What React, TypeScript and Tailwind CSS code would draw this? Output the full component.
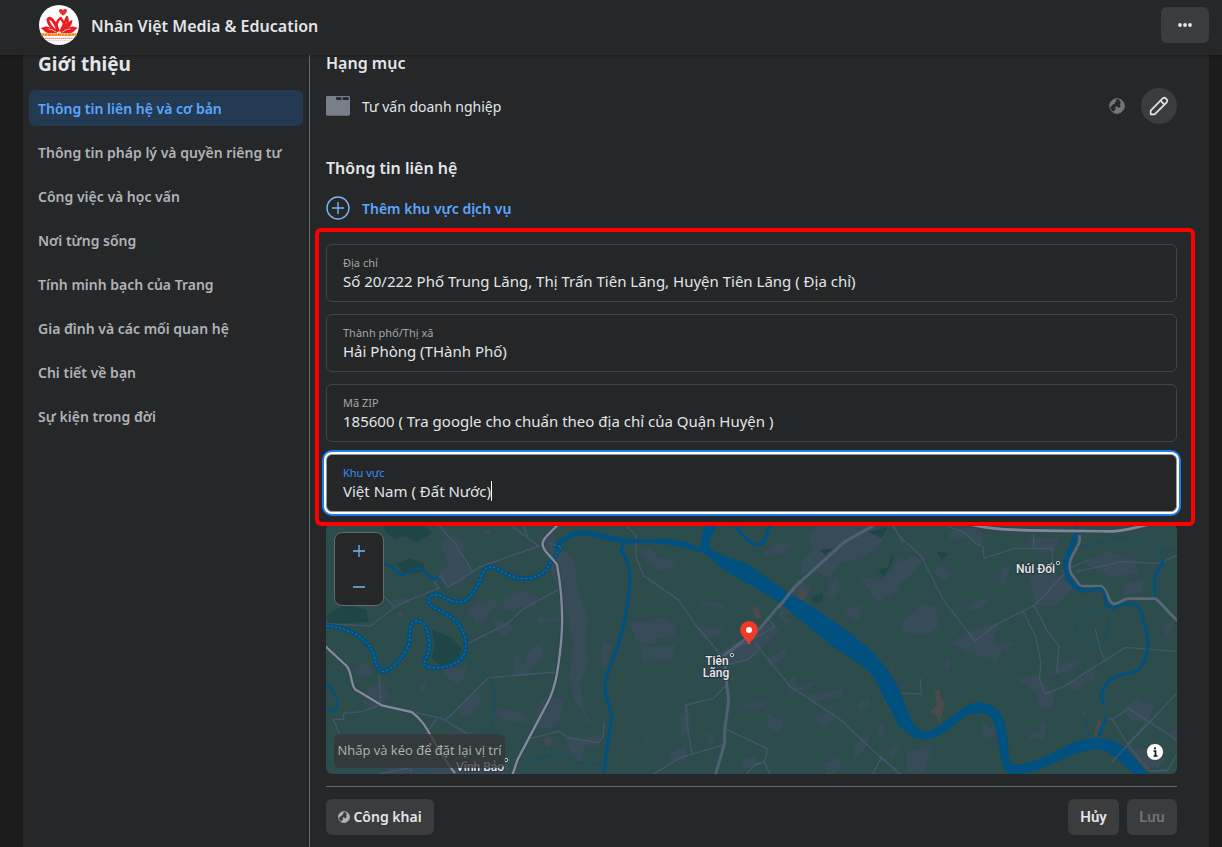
import React from "react";

const sections = [
  "Thông tin liên hệ và cơ bản",
  "Thông tin pháp lý và quyền riêng tư",
  "Công việc và học vấn",
  "Nơi từng sống",
  "Tính minh bạch của Trang",
  "Gia đình và các mối quan hệ",
  "Chi tiết về bạn",
  "Sự kiện trong đời",
];

const fields = [
  { id: "address", label: "Địa chỉ", value: "Số 20/222 Phố Trung Lăng, Thị Trấn Tiên Lãng, Huyện Tiên Lãng ( Địa chỉ)" },
  { id: "city", label: "Thành phố/Thị xã", value: "Hải Phòng (THành Phố)" },
  { id: "zip", label: "Mã ZIP", value: "185600 ( Tra google cho chuẩn theo địa chỉ của Quận Huyện )" },
  { id: "region", label: "Khu vực", value: "Việt Nam ( Đất Nước)", active: true },
];

function Logo() {
  return (
    <svg viewBox="0 0 120 120" className="size-10 shrink-0" aria-hidden="true">
      <circle cx="60" cy="60" r="60" fill="#fff" />
      <path d="M72 32c-7-6-12-10-12-15 0-6 8-7 12-1 3-6 12-5 12 1 0 6-5 9-12 15z" fill="#e0342c" />
      <g fill="none" stroke="#ee1c22" strokeLinejoin="round">
        <path d="M53 80C40 72 27 56 27 45c1-9 11-5 17 5 7 11 12 20 14 29" strokeWidth="9" />
        <path d="M56 80C51 64 53 47 65 39c7 10 13 20 18 31" strokeWidth="7" />
        <path d="M64 80c7-14 14-29 20-44 4 12 2 25-6 39" strokeWidth="7" />
      </g>
      <g fill="#ee1c22">
        <path d="M55 84C47 76 36 66 24 65c-7-1-13 3-20 5 8 2 12 12 22 14z" />
        <path d="M64 84c10-9 20-18 34-19 7-1 12 3 19 4-8 3-11 13-22 15z" />
        <path d="M67 81c4-17 16-30 33-36 1 15-12 29-33 36z" />
      </g>
      <path d="M28 72q14 0 24 10M94 72q-16 0-24 10" stroke="#fff" strokeWidth="2" fill="none" />
      <path d="M7 89h106" stroke="#f28a22" strokeWidth="8" strokeDasharray="9 1" />
      <path d="M18 100h84" stroke="#ef7770" strokeWidth="3" strokeDasharray="5 1" />
      <path d="M26 107h68" stroke="#d7a0a0" strokeWidth="2" strokeDasharray="4 2" />
    </svg>
  );
}

function Globe({ className }: { className: string }) {
  return (
    <svg viewBox="0 0 48 48" className={className} aria-hidden="true">
      <circle cx="24" cy="24" r="22" fill="none" stroke="currentColor" strokeWidth="3" />
      <path
        fill="currentColor"
        d="M8 9C12 4 18 2 24 2l-4 5 3 3-5 3-1 5-5 1-4 6-6 1C2 19 4 13 8 9zM31 4c10 3 15 11 15 20 0 12-9 22-22 22-6 0-10-2-14-5l6-2 4-6-2-6 6-2 4 4 5-1 2-5-3-4 4-5-4-4z"
      />
    </svg>
  );
}

function Pencil() {
  return (
    <svg viewBox="0 0 60 60" className="size-5" fill="none" stroke="#e2e5e9" strokeWidth="5" strokeLinejoin="round" aria-hidden="true">
      <path d="M5 44L41 7q5-4 9 0l3 3q4 4 0 9L17 55H5z" />
      <path d="M35 14l11 12" />
    </svg>
  );
}

function Folder() {
  return (
    <svg viewBox="0 0 72 60" className="h-5 w-6 shrink-0" aria-hidden="true">
      <rect width="72" height="59" rx="4" fill="#777f8b" />
      <path d="M29 4h17v8H32zM50 4h18v8H50z" fill="#252728" />
    </svg>
  );
}

function MapDrawing() {
  return (
    <svg viewBox="326 524 851 250" preserveAspectRatio="xMidYMid slice" className="block h-full w-full" aria-label="Bản đồ Tiên Lãng">
      <rect x="0" y="400" width="1600" height="500" fill="#2c4d4b" />

      <g transform="translate(320 520) scale(.333333)">
        <g fill="#1f4647">
          <path d="M190 15h120l25 25-45 28-35-20-30 10-28-22zM230 130l40-15 42 15-2 25-60 8zM20 285l60-35 60 20 5 35-120 8zM335 330l55 20 35 35-10 38-55 15-25-25 10-35z" />
        </g>
        <g fill="#384b59">
          <path d="M360 65l55-22 20 35-10 40 30 30-25 40-60 8-15-35 30-25zM440 270l35-28 20 10 25-20 12 25-22 15-10 25-30 15zM550 235l55-25 50 20-10 30-40-5-25 20-30-5zM510 290l60 20 10 20-30 25-20-28zM655 45l45-5 15 45 45 25 15 100 30 90-10 80 10 50-25 60 15 90 20 25-10 5-45-75-10-70 10-100-15-70zM215 240l45-8 10 15-45 12zM105 440l30-10 25 20-15 22-35-5zM145 505l45-15 20 40-30 30-50-5zM295 490l20-5 2 25-20 3zM365 445l75-5-5 25-20 30-35-25zM415 560l55-45 15 35-35 40-25-5zM530 565l80 15 20 20-40 8-60-20zM580 410l22 0 5 35 15-50 50-38-5 60-30 25-15 28-40-5zM665 535h65v30l-10 30-20 25-60 10 5-40zM650 295l70-10v20l-60 8zM730 650l55 10 60-20-15 35-35 10-15 45-25-30zM370 640l55-5 30 25-60 10zM200 740l80-40 100 45 90-30 90 40v20H200z" />
          <path d="M845 365l30 10-20 70-10-10zM270 680l60-20 50 30-20 30z" />
        </g>
        <g fill="#434b50"><path d="M232 278l15-6 4 15-14 6zM490 28l22 3-8 15zM672 655l20-5 3 24-18 8zM680 135l18-4v18z" /></g>
        <g fill="none" stroke="#46566a" strokeWidth="4">
          <path d="M355 15l50 55 53 85 24-15 175-62-45-32-50-40M610 15l12 35M5 310l145 8 75-57 45-22 88-35-15-15 20-22 20 35 75-47M225 261l-40-38M445 370l115-58 50-45 105-58M178 465l3 90-55 20-55 5v18H40l60 145M375 603l130-130 200-17M275 575l90 20 70 42 80 63 50 50M270 760l30-90 50-75M180 760l60-10 120-25 60-45M630 656l85-22 35 20 85 14 15-20 2-44" />
        </g>
        <g fill="none" stroke="#005180">
          <path d="M185 132c55 0 35 45 75 28 45-27 45-7 78 15h20" strokeWidth="8" />
          <path d="M345 175q20 10 25 40M0 440l110 65M430 405l75 65q30 50 15 120t-50 70M600 745q100-60 145-30t130 10M230 770q70-30 110 0" strokeWidth="2" />
          <path d="M5 475q65 60 40 97H10" strokeWidth="6" />
          <path d="M5 316c75 5 130 30 157 87 6 29 13 54 32 52 32-17 57-45 70-76 9-18-1-67 19-75 28-7 45 23 45 76 0 31-30 51-5 60 44 11 112-7 115-58 0-91-79-104-107-127-20-29 17-37 38-25 49 30 75 15 94-17 27-36 18-76 57-72 30 12 53 37 93 35 37 0 67-19 80-50l31-45" strokeWidth="14" strokeLinejoin="round" />
          <path d="M705 85c35-48 75-50 115-43 35 5 70 24 110 20" strokeWidth="15" />
          <path d="M5 316c75 5 130 30 157 87 6 29 13 54 32 52 32-17 57-45 70-76 9-18-1-67 19-75 28-7 45 23 45 76 0 31-30 51-5 60 44 11 112-7 115-58 0-91-79-104-107-127-20-29 17-37 38-25 49 30 75 15 94-17 27-36 18-76 57-72 30 12 53 37 93 35 37 0 67-19 80-50l31-45-42-12" stroke="#64788a" strokeWidth="2" strokeDasharray="7 6" />
        </g>
        <g fill="none" stroke="#34404b" strokeWidth="12" strokeLinejoin="round"><path d="M10 373l70 65c15 17 12 50 25 70l80 48 90 20c55 40 50 80 130 184M720 8l-35 35c-20 20-23 33-7 52l33 38c16 90 20 155 12 235-8 80-15 130-40 180l-90 170-20 60" /></g>
        <g fill="none" stroke="#7d8b9b" strokeWidth="7" strokeLinejoin="round"><path d="M10 373l70 65c15 17 12 50 25 70l80 48 90 20c55 40 50 80 130 184M720 8l-35 35c-20 20-23 33-7 52l33 38c16 90 20 155 12 235-8 80-15 130-40 180l-90 170-20 60" /></g>
      </g>

      <g transform="translate(600 520) scale(.333333)">
        <g fill="#384b59">
          <path d="M625 40l35-25h125l80 15-30 55-55 30-60 15-30 45-45-25-45 10 10-40 25-25zM120 95l35-15 15 30 60 15-10 20-45 5-30-20zM90 305l60 0 35-15 45 30-10 30-50 5-5 20-55-10zM125 380l100-5-10 45-90 5zM300 240l50 10 30 5-10 10-55-5zM285 320l80 5 10-10-15 30-50 10zM490 95l50-28 40 10-30 25-50 5zM570 210l30-30 35 25-25 35-60 50 35 15-30 10-20-30zM690 185l25-15 5 35-20 35-20-10zM775 170l80 10 45-80v110l-70 35-25-40zM735 270l45-15v40l-25 5zM355 400l75-45 70-45 40 15-30 40-60 50-70 20zM500 420l70-45-20 40-40 25zM560 490l25-25 10 35 50-20-10 20-60 20zM625 525l85-15 20-10 0 30-100 15zM645 590l60-15-5 30-30 20zM500 580l50 25-10 35-35-20zM420 560l45-20 35 10-35 20zM760 680l50-45-5 40-40 40zM210 700l55-30-10 50-45 5zM320 645l20-5 5 25-20 10zM420 720l40-10 20 20-50 20zM670 730l50-20v40l-35 20zM775 550l30-15 10 20-35 20zM832 620l20-20 5 40-20 15zM240 590l20-30 15 25-10 60h-20zM130 640l25 35-15-2z" />
        </g>
        <g fill="#1f4647"><path d="M805 35l60-15-20 35zM660 90l40-5-25 20zM835 150l30-10 12-45v30l-27 45zM635 230l35-10-5 25-25 5z" /></g>
        <g fill="#494b4c"><path d="M455 260l20 3 10 30-15 5zM590 215l25-8 5 20-20 18zM870 420l10 50-7-20zM800 470l12-12 4 6zM850 540l12 5 15 40z" /></g>
        <g fill="none" stroke="#46566a" strokeWidth="5" strokeLinejoin="round">
          <path d="M80 20l28 25v65l23 57 104 72 55 80 72 85M365 410l160-90-22-25M385 433l60-15 30-25M465 370l105 128 150 100 125 118 60 50M842 716l-30 60M380 495l-40 40-82 20q3 70 18 145M370 675l-130 38-80 50M372 625l125 58q10 10-5 42l20 40M440 760l25-25 28-10M880 15l30 55M330 425l50 10" strokeWidth="4" />
          <path d="M370 407L480 325l105-125 150-135 80-45 50-30M375 430l5 60 6 50-12 90v40l-31 105" strokeWidth="9" stroke="#4f6072" />
        </g>
        <g fill="#005180">
          <path d="M318 8H358Q322 65 330 84Q345 100 440 130L560 215L640 262L745 335Q800 375 830 410Q870 455 905 530V632L850 530Q825 465 790 440L700 380L600 300L540 248L460 200L370 150L320 105Q285 95 318 8z" />
          <path d="M0 38c60 20 90 20 200 18 50 3 85 15 115 38l-15 3c-90-30-140-28-195-28-45 2-75-5-105-20z" />
        </g>
        <g fill="none" stroke="#005180" strokeWidth="10">
          <path d="M75 70c-20 20-12 20 0 40 18 45 18 60 8 140-6 50-25 120-47 175-25 62-27 75-14 115l14 50c-12 70-20 110-24 180" />
          <path d="M400 10c30 45 60 65 72 65 30-5 25-30 40-62" />
        </g>
        <path d="M534 264l51-64" stroke="#536476" strokeWidth="9" />
      </g>

      <g transform="translate(880 520) scale(.333333)">
        <g fill="#384b59">
          <path d="M205 35l70-15 35 20-5 35-40-20-55 5zM440 55h95l-10 35-65 5zM70 300l60-50 35 10 10 60-30 25-80-10zM155 150l30-15 35 25-30 25zM0 195l40-55 60-35 30 15-45 50-50 45-35 30zM205 370l85-45 70-20-20 60 30 15-20 45-60-20zM360 370l40-5-20 35zM270 250l60-18-25 35-45 5zM365 145l30-10-20 55-20 5zM450 170l60-20 75 50-60 60-60-5zM605 125l80-30 80 25 10 40-80 10-60-25zM725 195l70-20-10 45-50 5zM185 430l30-15-10 35zM410 475l60-10 50 60v30l-40 15-15-55zM500 465l40-25 55-25 10 20-45 20zM560 490l45-25 15 30-35 20zM610 465l30-15 5 20-25 20zM725 570l45-35 50 25-20 50-45-10zM305 590l15 30 35 10-20 25-30-10zM455 640l25-10 5-40 15 30-10 35-45 5zM80 700l80-30-30 90H80zM850 320l40-25-35 70zM870 640l20-20v60zM20 690l45-20-30 50zM720 700l65-20 70 35-20 30-50-5z" />
        </g>
        <g fill="#1f4647"><path d="M170 95l35 5-20 20z" /></g>
        <g fill="#494b4c"><path d="M165 515l15-10v30l15 10-10 35-5 35-10-25-20-15 20-20zM655 600l10 5-15 45-10-5zM600 580l20-5-5 12z" /></g>
        <g fill="none" stroke="#46566a" strokeWidth="4">
          <path d="M35 15l25 35 65 60 65 130 95 123 60-48 120-60 90-95M195 15l62 25 30 30 22 10 3 35 90-30h115v70M460 80l2-50M430 275l37 75 16 80-5 45 18 47 60-25 180-115 155 12M463 257l37 72 37 50-7 80M645 325l15 60 13 34M590 155l135-30 110 5 60-25M0 707l60 55M120 475l5 47-60-2M680 595l18 3 48-33 145 95M698 600l50 80 60 73 55-3 35-60M695 727l200-212M545 155l80-35" />
          <path d="M598 45c10 40-45 65-25 115l28 38h63c22 15 17 40 34 53 18 4 28-15 48-15h80c25 18 35 42 70 68" strokeWidth="8" stroke="#5a697a" />
        </g>
        <g fill="none" stroke="#005180">
          <path d="M586 10c20 55-34 60-29 135 10 60 50 75 75 65 25-5 42-17 47 45l20 10c40-20 85-27 92 40 18 50 16 100-10 140-35 30-77 3-106 55-20 36-10 30-4 52" strokeWidth="9" />
          <path d="M586 30c5 40-28 60-29 110 5 55 40 70 60 72" strokeWidth="14" />
          <path d="M593 80l75-12q40-35 110-3 60 30 112 27M840 80l10 50-28 52 5 50M675 270c-60 15-105 15-85 65 15 40 45 45 70 42q20-15 30-100M820 250l-35 20M595 592l25 15 5 40M675 545l10 50-13 15" strokeWidth="2" />
          <path d="M850 120l-25 50v60M678 595l-25 65" strokeWidth="9" />
        </g>
        <path fill="#005180" d="M0 425C25 448 45 480 62 518C80 565 100 635 135 635c55-5 105-88 162-88 75 5 85 65 92 180 37 25 135-30 190-60 70-25 135-15 175 35l55 65H765c-55-50-75-83-130-78-90 15-160 80-245 75-52-30-15-190-90-185-75 0-80 75-175 80C90 655 65 625 50 600L0 510z" />
        <path d="M695 727L800 610M746 680l62 73h55" stroke="#46566a" strokeWidth="4" fill="none" />
        <path d="M240 5C330 38 420 34 700 34 750 30 790 18 850 2" stroke="#394550" strokeWidth="14" fill="none" />
        <path d="M240 5C330 34 420 31 700 34 750 30 790 18 850 2" stroke="#7b899a" strokeWidth="8" fill="none" />
      </g>

      <g fill="#e6e9ec" stroke="#293642" strokeWidth="2" paintOrder="stroke" strokeLinejoin="round" fontFamily="Roboto, sans-serif" fontSize="12" fontWeight="500">
        <text x="717" y="665" textAnchor="middle">Tiên</text>
        <text x="716" y="677" textAnchor="middle">Lãng</text>
        <text x="1016" y="573">Núi Đối</text>
        <text x="456" y="771">Vĩnh Bảo</text>
      </g>
      <g fill="#263a40" stroke="#c3cbd1" strokeWidth="1">
        <circle cx="732" cy="655" r="1.7" />
        <circle cx="1058" cy="563" r="1.7" />
        <circle cx="506" cy="760" r="1.7" />
      </g>
      <path d="M749 645c-2-6-9-9-9-15a9 9 0 0 1 18 0c0 6-7 9-9 15z" fill="#f03a26" />
      <circle cx="749" cy="630" r="3" fill="#fff" />
    </svg>
  );
}

export default function App() {
  return (
    <div className="min-h-screen bg-[#1c1c1d] font-['Noto_Sans','Open_Sans',sans-serif] text-[#e2e5e9]">
      <header className="relative flex h-[55px] items-center gap-3 bg-[#252728] pr-[13px] pb-[5px] pl-[39px] shadow-[0_1px_2px_rgba(0,0,0,0.3)]">
        <Logo />
        <h1 className="flex-1 pt-0.5 text-base font-semibold">Nhân Việt Media &amp; Education</h1>
        <button type="button" aria-label="Tùy chọn khác" className="flex h-9 w-12 items-center justify-center rounded-md bg-[#3b3c3e]">
          <svg viewBox="0 0 14 4" className="h-1 w-3.5" fill="#e2e5e9" aria-hidden="true">
            <circle cx="2" cy="2" r="1.9" />
            <circle cx="7" cy="2" r="1.9" />
            <circle cx="12" cy="2" r="1.9" />
          </svg>
        </button>
      </header>

      <div className="mr-[13px] ml-[23px] flex min-h-[792px] bg-[#252728]">
        <aside className="w-[287px] shrink-0 border-r border-[#65686c] px-1.5">
          <h2 className="mb-[17px] pl-[9px] text-[19px] leading-[18px] font-bold">Giới thiệu</h2>
          <nav className="flex flex-col gap-2 text-sm font-semibold">
            {sections.map((name, i) => (
              <a
                key={name}
                href="#"
                className={
                  i === 0
                    ? "flex h-9 items-center rounded-md bg-[#243a52] pt-0.5 pl-[9px] whitespace-nowrap text-[#5aa7ff]"
                    : "flex h-9 items-center rounded-md pt-0.5 pl-[9px] whitespace-nowrap text-[#b0b3b8]"
                }
              >
                {name}
              </a>
            ))}
          </nav>
        </aside>

        <main className="min-w-0 flex-1 pr-8 pl-4">
          <h3 className="text-base leading-4 font-semibold">Hạng mục</h3>
          <div className="mt-[17px] flex h-9 items-center">
            <Folder />
            <p className="ml-3 flex-1 pt-0.5 text-sm">Tư vấn doanh nghiệp</p>
            <Globe className="mr-4 size-4 text-[#737679]" />
            <button type="button" aria-label="Chỉnh sửa hạng mục" className="flex size-9 items-center justify-center rounded-full bg-[#3b3c3e]">
              <Pencil />
            </button>
          </div>

          <h3 className="mt-8 pt-0.5 text-base leading-5 font-semibold">Thông tin liên hệ</h3>
          <button type="button" className="mt-[18px] flex h-6 items-center gap-3 text-sm font-semibold text-[#5aa7ff]">
            <svg viewBox="0 0 24 24" className="size-6" fill="none" stroke="#75b6f5" strokeWidth="1.4" aria-hidden="true">
              <circle cx="12" cy="12" r="11" />
              <path d="M12 6v12M6 12h12" />
            </svg>
            <span className="pt-0.5">Thêm khu vực dịch vụ</span>
          </button>

          <form className="pt-6">
            <div className="relative flex flex-col gap-3">
              {fields.map((field) => (
                <div
                  key={field.id}
                  className={
                    field.active
                      ? "h-[58px] rounded-md border border-[#999] bg-[#242627] px-4 pt-2.5 shadow-[0_0_0_2px_#fff,0_0_0_4px_#1c7cf2]"
                      : "h-[58px] rounded-md border border-[#414345] bg-[#242627] px-4 pt-2.5"
                  }
                >
                  <label
                    htmlFor={field.id}
                    className={field.active ? "block text-[11px] leading-4 text-[#3b8df5]" : "block text-[11px] leading-4 text-[#a3a6aa]"}
                  >
                    {field.label}
                  </label>
                  {field.active ? (
                    <div className="flex h-5 items-center">
                      <input id={field.id} defaultValue={field.value} className="field-sizing-content bg-transparent text-[15px] leading-5 caret-transparent outline-none" />
                      <span className="h-5 w-px bg-white" />
                    </div>
                  ) : (
                    <input id={field.id} defaultValue={field.value} className="block h-5 w-full bg-transparent text-[15px] leading-5 outline-none" />
                  )}
                </div>
              ))}
              <div className="pointer-events-none absolute -top-4 -right-[18px] -bottom-3.5 -left-[11px] z-10 rounded-md border-4 border-[#fe0000]" />
            </div>

            <div className="relative mt-3 h-[250px] overflow-hidden rounded-md">
              <MapDrawing />
              <div className="absolute top-2 left-2 flex h-[74px] w-[50px] flex-col rounded-lg border border-[#65686c] bg-[#252728]">
                <button type="button" aria-label="Phóng to" className="flex flex-1 items-center justify-center">
                  <svg viewBox="0 0 12 12" className="size-3" stroke="#75b6f5" strokeWidth="1.3" aria-hidden="true"><path d="M6 0v12M0 6h12" /></svg>
                </button>
                <button type="button" aria-label="Thu nhỏ" className="flex flex-1 items-center justify-center">
                  <svg viewBox="0 0 12 12" className="size-3" stroke="#75b6f5" strokeWidth="1.3" aria-hidden="true"><path d="M0 6h12" /></svg>
                </button>
              </div>
              <p className="absolute bottom-1.5 left-2 flex h-[34px] w-[171px] items-center justify-center rounded-md bg-[#343434]/75 font-['Open_Sans','Noto_Sans',sans-serif] text-[13px] whitespace-nowrap text-[#b0b3b8]">
                Nhấp và kéo để đặt lại vị trí
              </p>
              <button type="button" aria-label="Thông tin bản đồ" className="absolute right-3.5 bottom-3.5 size-4">
                <svg viewBox="0 0 16 16" className="size-4 overflow-visible" aria-hidden="true">
                  <circle cx="8" cy="8" r="8.5" fill="#fff" stroke="#202224" strokeWidth=".7" />
                  <path d="M6.5 7h2v5M6.5 12h4" stroke="#111" strokeWidth="1.6" fill="none" />
                  <circle cx="8" cy="4.3" r="1.1" fill="#111" />
                </svg>
              </button>
            </div>

            <div className="mt-3 flex items-start border-t border-[#65686c] pt-3">
              <button type="button" className="flex h-9 w-[108px] items-center justify-center gap-[3px] rounded-md bg-[#3b3c3e] text-sm font-semibold whitespace-nowrap">
                <Globe className="size-3 text-[#b0b3b8]" />
                Công khai
              </button>
              <div className="flex-1" />
              <button type="button" className="mr-2 h-9 w-[51px] rounded-md bg-[#3b3c3e] font-['Roboto',sans-serif] text-[15px] font-semibold">
                Hủy
              </button>
              <button type="button" disabled className="h-9 w-[50px] rounded-md bg-[#3b3c3e] font-['Roboto',sans-serif] text-[15px] font-semibold text-[#707276]">
                Lưu
              </button>
            </div>
          </form>
        </main>
      </div>
    </div>
  );
}
